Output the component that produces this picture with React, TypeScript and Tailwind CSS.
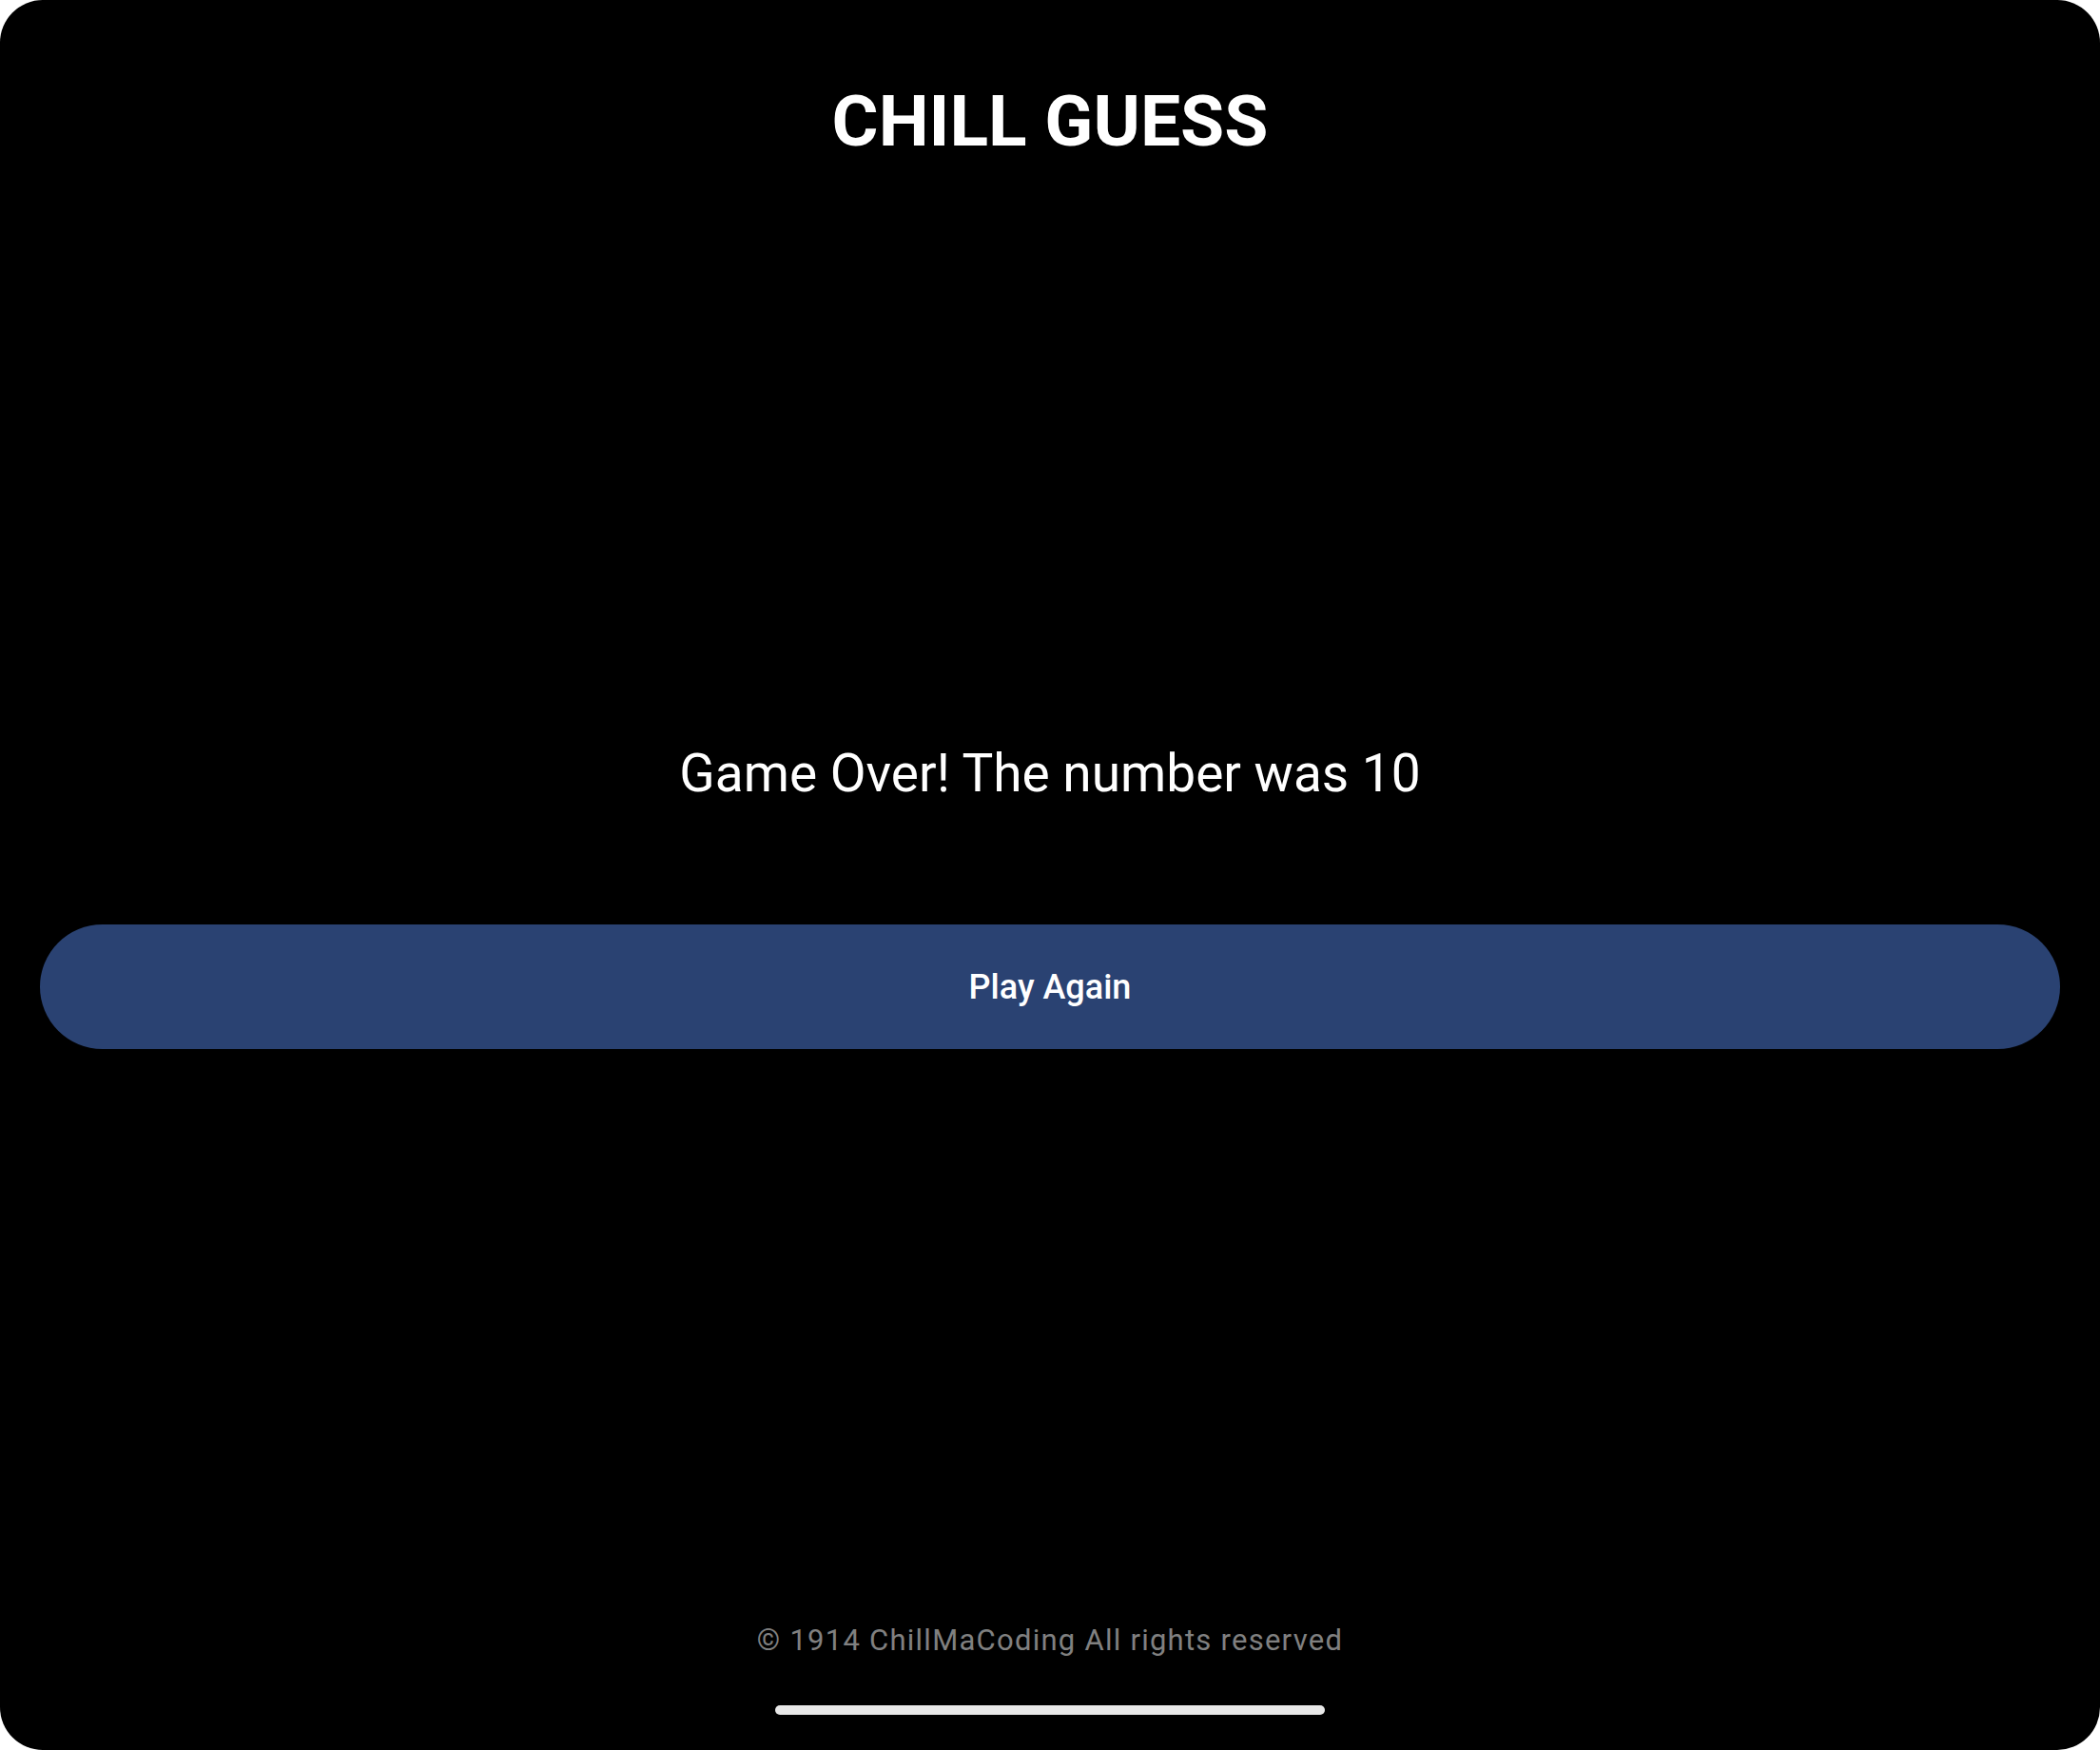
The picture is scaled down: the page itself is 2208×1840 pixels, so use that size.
import React from 'react';

export default function App() {
  return (
    <div className="w-[2208px] h-[1840px] bg-white">
      <div className="w-full h-full bg-black rounded-[45px] flex flex-col items-center px-[42px] font-['Roboto',sans-serif]">
        {/* Title */}
        <h1 className="mt-[90px] text-[75px] leading-none font-bold text-white">CHILL GUESS</h1>

        {/* Result */}
        <p className="mt-[621px] text-[55px] leading-none text-white">Game Over! The number was 10</p>

        <button className="mt-[131px] w-full h-[131px] rounded-full bg-[#2a4272] text-white text-[36px] font-medium flex items-center justify-center">
          Play Again
        </button>

        {/* Footer */}
        <p className="mt-[606px] text-[31px] leading-none tracking-[1.25px] text-[#808080]">© 1914 ChillMaCoding All rights reserved</p>

        <div className="mt-[53px] w-[578px] h-[10px] rounded-full bg-[#e8e8e8]" />
      </div>
    </div>
  );
}
